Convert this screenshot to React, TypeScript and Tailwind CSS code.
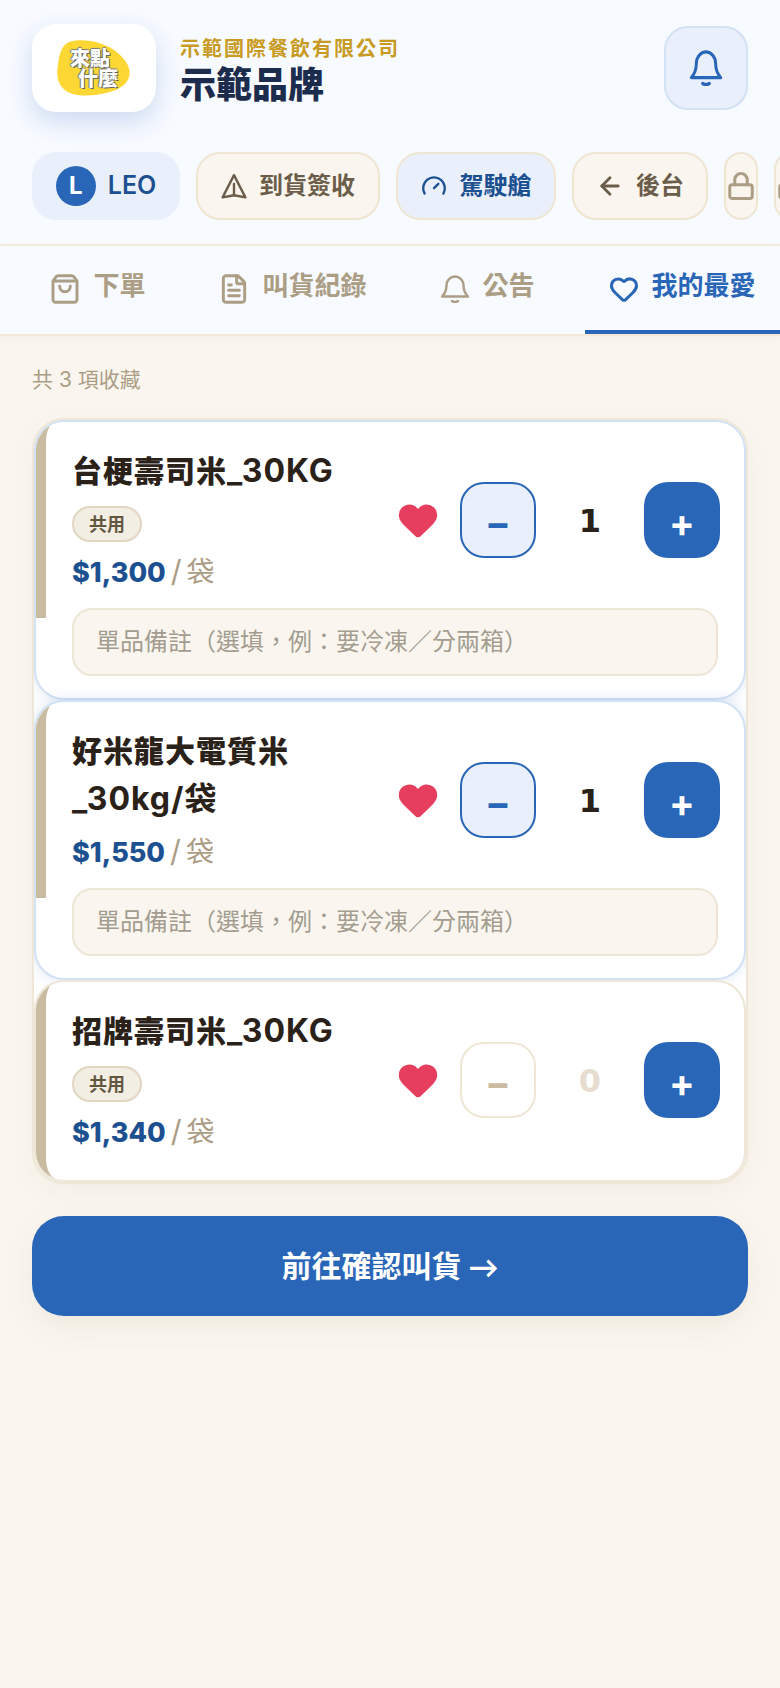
import { ArrowLeft, FileText, Gauge, Heart, Lock, ShoppingBag } from 'lucide-react';

const latin = "font-['Inter','Noto_Sans_CJK_TC',sans-serif]";

type Item = {
  name: [string, string][];
  shared: boolean;
  price: string;
  qty: number;
  note: boolean;
};

// name lines are [cjk part, latin part], the latin part is set a little larger
const items: Item[] = [
  { name: [['台梗壽司米', '_30KG']], shared: true, price: '$1,300', qty: 1, note: true },
  { name: [['好米龍大電質米', ''], ['', '_30kg/袋']], shared: false, price: '$1,550', qty: 1, note: true },
  { name: [['招牌壽司米', '_30KG']], shared: true, price: '$1,340', qty: 0, note: false },
];

function Logo() {
  return (
    <div className="w-[124px] h-[88px] rounded-[24px] bg-white flex items-center justify-center shrink-0 shadow-[0_10px_24px_rgba(42,102,184,0.2)]">
      <div className="relative w-[74px] h-[58px]">
        <svg viewBox="0 0 74 58" className="absolute inset-0 w-full h-full">
          <path d="M12 3C24 -1 48 2 62 15C72 24 77 35 68 45C58 55 30 59 16 55C4 51 -2 42 1 26C2 15 5 6 12 3Z" fill="#fdd835" />
        </svg>
        <div className="absolute inset-0 flex flex-col items-center justify-center text-white text-[20px] leading-[20px] font-black font-['Noto_Sans_CJK_TC',sans-serif] [text-shadow:1px_1px_0_#666,-1px_0_1px_#777,0_-1px_1px_#777]">
          <span className="-ml-[8px]">來點</span>
          <span className="ml-[8px]">什麼</span>
        </div>
      </div>
    </div>
  );
}

// flared bell, the lucide one is too narrow at the base
function BellIcon({ width, height, stroke }: { width: number; height: number; stroke: number }) {
  return (
    <svg width={width} height={height} viewBox="0 0 30 28" preserveAspectRatio="none" fill="none" stroke="currentColor" strokeWidth={stroke} strokeLinecap="round" strokeLinejoin="round">
      <path d="M2 21.5H28C25 18.5 23.5 15.5 23.5 10.5A8.5 9 0 0 0 6.5 10.5C6.5 15.5 5 18.5 2 21.5Z" />
      <path d="M12 26C13.5 27.2 16.5 27.2 18 26" />
    </svg>
  );
}

function ArrivalIcon() {
  return (
    <svg width={26} height={26} viewBox="0 0 24 24" fill="none" stroke="currentColor" strokeWidth={2.2} strokeLinecap="round" strokeLinejoin="round">
      <path d="M12 2L1.5 22.5L12 20.5L22.5 22.5Z" />
      <path d="M12 10V20.5" />
    </svg>
  );
}

function Chip({ children, className }: { children: React.ReactNode; className: string }) {
  return (
    <div className={`h-[68px] rounded-[24px] flex items-center justify-center shrink-0 ${className}`}>
      {children}
    </div>
  );
}

function Tab({ icon, label, active }: { icon: React.ReactNode; label: string; active?: boolean }) {
  return (
    <div className={`relative flex-1 flex items-center justify-center gap-[12px] pb-[8px] ${active ? 'text-[#2a66b8]' : 'text-[#ac9d85]'}`}>
      <span className="mt-[6px]">{icon}</span>
      <span className={`text-[26px] leading-[34px] ${active ? 'font-bold' : 'font-semibold'}`}>{label}</span>
      {active && <div className="absolute left-0 right-0 bottom-0 h-[4px] bg-[#2a66b8]" />}
    </div>
  );
}

function Card({ item }: { item: Item }) {
  const active = item.qty > 0;
  return (
    <div className={`bg-white border-2 rounded-[30px] overflow-hidden ${active ? 'border-[#d2e1f3] shadow-[0_0_14px_rgba(42,102,184,0.16)] h-[280px]' : 'border-[#eee6d6] h-[202px]'}`}>
      <div className={`h-[196px] border-l-[10px] border-[#c9bb9f] flex items-center pl-[26px] pr-[24px] ${item.note ? 'rounded-tl-[20px]' : 'rounded-l-[20px]'}`}>
        <div className="flex-1 min-w-0 flex flex-col">
          {item.name.map(([cjk, rest]) => (
            <div key={cjk + rest} className="h-[48px] text-[30px] leading-[48px] font-extrabold tracking-[1px] text-[#2a2119] whitespace-nowrap">
              {cjk}
              <span className="text-[32px] font-bold tracking-[1px]">{rest}</span>
            </div>
          ))}
          {item.shared && (
            <div className="mt-[11px] self-start h-[36px] px-[15px] rounded-full border-2 border-[#e0d6c2] bg-[#f3eee4] text-[18px] font-semibold text-[#63573f] flex items-center">共用</div>
          )}
          <div className={`flex items-baseline h-[44px] ${item.shared ? 'mt-[7px]' : 'mt-[6px]'}`}>
            <span className="text-[27px] font-extrabold text-[#1c5090]">{item.price}</span>
            <span className="text-[30px] text-[#ac9d85] ml-[5px]">/</span>
            <span className="text-[28px] text-[#ac9d85] ml-[5px]">袋</span>
          </div>
        </div>
        <Heart size={46} className="text-[#e63e5e] mr-[19px] shrink-0" fill="currentColor" strokeWidth={0} />
        <div className={`w-[76px] h-[76px] rounded-[24px] border-2 flex items-center justify-center pt-[6px] text-[38px] leading-none font-bold shrink-0 ${active ? 'border-[#2a66b8] bg-[#e9f0fb] text-[#2a66b8]' : 'border-[#eee6d6] bg-white text-[#c9bb9f]'}`}>−</div>
        <div className={`w-[108px] text-center text-[32px] pt-[2px] font-bold font-['DejaVu_Sans',sans-serif] ${active ? 'text-[#2a2119]' : 'text-[#e6ddcf]'}`}>{item.qty}</div>
        <div className="w-[76px] h-[76px] rounded-[24px] bg-[#2a66b8] text-white flex items-center justify-center pt-[6px] text-[38px] font-bold shrink-0">+</div>
      </div>
      {item.note && (
        <div className="-mt-[10px] ml-[36px] mr-[26px] h-[68px] rounded-[20px] border-2 border-[#ede5d5] bg-[#faf6ef] px-[22px] flex items-center text-[24px] text-[#a39c8f] whitespace-nowrap">
          單品備註（選填，例：要冷凍／分兩箱）
        </div>
      )}
    </div>
  );
}

export default function App() {
  return (
    <div className={`min-h-screen bg-[#faf6ef] ${latin}`}>
      <header className="bg-[#f7faff] h-[246px] border-b-2 border-[#f3ece1] overflow-hidden">
        <div className="h-[136px] pl-[32px] pr-[32px] flex items-center gap-[24px]">
          <Logo />
          <div className="flex-1 min-w-0 pt-[7px]">
            <div className="text-[20px] leading-[26px] font-bold tracking-[2px] text-[#c89a22]">示範國際餐飲有限公司</div>
            <div className="text-[36px] leading-[46px] font-extrabold text-[#1c2c4c]">示範品牌</div>
          </div>
          <div className="w-[84px] h-[84px] rounded-[24px] border-2 border-[#d2e1f3] bg-[#e9f0fb] flex items-center justify-center text-[#2a66b8]">
            <BellIcon width={34} height={36} stroke={2.6} />
          </div>
        </div>
        <div className="pl-[32px] flex gap-[16px] mt-[16px] w-[820px]">
          <Chip className="w-[148px] bg-[#e9f0fb] gap-[12px]">
            <div className="w-[40px] h-[40px] rounded-full bg-[#2a66b8] text-white text-[24px] font-bold flex items-center justify-center">L</div>
            <span className="text-[25px] font-semibold text-[#1c5090]">LEO</span>
          </Chip>
          <Chip className="w-[184px] border-2 border-[#efe5d3] bg-[#faf6ef] gap-[12px] text-[#6b5d4a]">
            <ArrivalIcon />
            <span className="text-[24px] font-bold">到貨簽收</span>
          </Chip>
          <Chip className="w-[160px] border-2 border-[#efe5d3] bg-[#e9f0fb] gap-[13px] text-[#1c5090]">
            <Gauge size={26} strokeWidth={2.2} />
            <span className="text-[24px] font-bold">駕駛艙</span>
          </Chip>
          <Chip className="w-[136px] border-2 border-[#efe5d3] bg-[#faf6ef] gap-[12px] text-[#6b5d4a]">
            <ArrowLeft size={28} strokeWidth={2.4} />
            <span className="text-[24px] font-bold">後台</span>
          </Chip>
          <Chip className="w-[34px] border-2 border-[#efe5d3] bg-[#faf6ef] text-[#ac9d85]">
            <Lock size={30} strokeWidth={2.4} className="shrink-0" />
          </Chip>
          <Chip className="w-[34px] border-2 border-[#efe5d3] bg-[#faf6ef] text-[#ac9d85]">
            <Lock size={30} strokeWidth={2.4} className="shrink-0" />
          </Chip>
        </div>
      </header>
      <nav className="h-[90px] bg-[#f7faff] border-b-2 border-[#f3e8d8] flex shadow-[0_2px_8px_rgba(120,90,40,0.05)]">
        <Tab icon={<ShoppingBag size={32} strokeWidth={2.2} />} label="下單" />
        <Tab icon={<FileText size={32} strokeWidth={2.2} />} label="叫貨紀錄" />
        <Tab icon={<BellIcon width={30} height={28} stroke={2.4} />} label="公告" />
        <Tab icon={<Heart size={30} strokeWidth={2.4} />} label="我的最愛" active />
      </nav>
      <main className="px-[32px]">
        <div className="text-[21px] leading-[32px] text-[#ac9d85] pt-[28px]">共 3 項收藏</div>
        <div className="mt-[22px] border-2 border-[#eee6d6] rounded-[32px] bg-white overflow-hidden shadow-[0_8px_24px_rgba(120,90,40,0.05)]">
          {items.map(item => (
            <Card key={item.name[0][0]} item={item} />
          ))}
        </div>
        <div className="mt-[32px] h-[100px] rounded-[32px] bg-[#2a66b8] flex items-center justify-center text-white text-[30px] font-bold shadow-[0_10px_30px_rgba(120,90,40,0.08)]">
          前往確認叫貨<span className="ml-[7px] font-['Lato',sans-serif]">→</span>
        </div>
      </main>
    </div>
  );
}
